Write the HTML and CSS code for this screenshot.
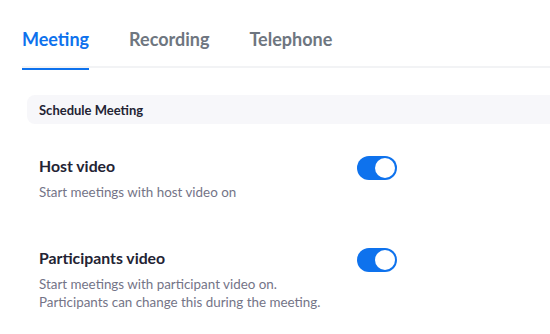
FILE: index.html
```html
<!DOCTYPE html>
<html>
<head>
<meta charset="utf-8">
<link rel="stylesheet" href="styles.css">
</head>
<body>
<div class="page">
  <nav class="tabs">
    <div class="tab active">Meeting</div>
    <div class="tab">Recording</div>
    <div class="tab">Telephone</div>
  </nav>
  <div class="section">
    <div class="section-head">Schedule Meeting</div>
    <div class="setting">
      <div class="info">
        <div class="title">Host video</div>
        <div class="desc">Start meetings with host video on</div>
      </div>
      <div class="toggle on"><span class="knob"></span></div>
    </div>
    <div class="setting">
      <div class="info">
        <div class="title">Participants video</div>
        <div class="desc">Start meetings with participant video on.<br>Participants can change this during the meeting.</div>
      </div>
      <div class="toggle on"><span class="knob"></span></div>
    </div>
  </div>
</div>
</body>
</html>
```
FILE: styles.css
```css
html, body {
  margin: 0;
  padding: 0;
  background: #ffffff;
  font-family: Lato, "Open Sans", sans-serif;
  overflow: hidden;
}
.page {
  padding-left: 22px;
}
.tabs {
  display: flex;
  gap: 40px;
  border-bottom: 2px solid #f2f3f5;
  height: 68px;
  box-sizing: border-box;
  align-items: flex-start;
  padding-top: 28px;
}
.tab {
  font-size: 18px;
  font-weight: 700;
  color: #6e7680;
  height: 40px;
  box-sizing: border-box;
}
.tab.active {
  color: #0e72ed;
  border-bottom: 2px solid #0e72ed;
  margin-bottom: -2px;
  height: 42px;
}
.section {
  padding-left: 5px;
  padding-top: 27px;
}
.section-head {
  background: #f7f7fa;
  border-radius: 8px 0 0 8px;
  height: 29px;
  display: flex;
  align-items: center;
  padding-left: 12px;
  font-size: 13px;
  font-weight: 700;
  color: #232333;
}
.setting {
  display: flex;
  align-items: flex-start;
  padding-left: 12px;
  padding-top: 32px;
}
.setting + .setting {
  padding-top: 47px;
}
.info {
  width: 318px;
}
.title {
  font-size: 15.8px;
  font-weight: 700;
  color: #232333;
  line-height: 20px;
}
.desc {
  margin-top: 7px;
  font-size: 13.4px;
  color: #747487;
  line-height: 18px;
}
.toggle {
  width: 40px;
  height: 24px;
  border-radius: 12px;
  background: #0e72ed;
  position: relative;
  margin-top: 0;
}
.knob {
  position: absolute;
  top: 2px;
  right: 2px;
  width: 20px;
  height: 20px;
  border-radius: 50%;
  background: #ffffff;
}
```
